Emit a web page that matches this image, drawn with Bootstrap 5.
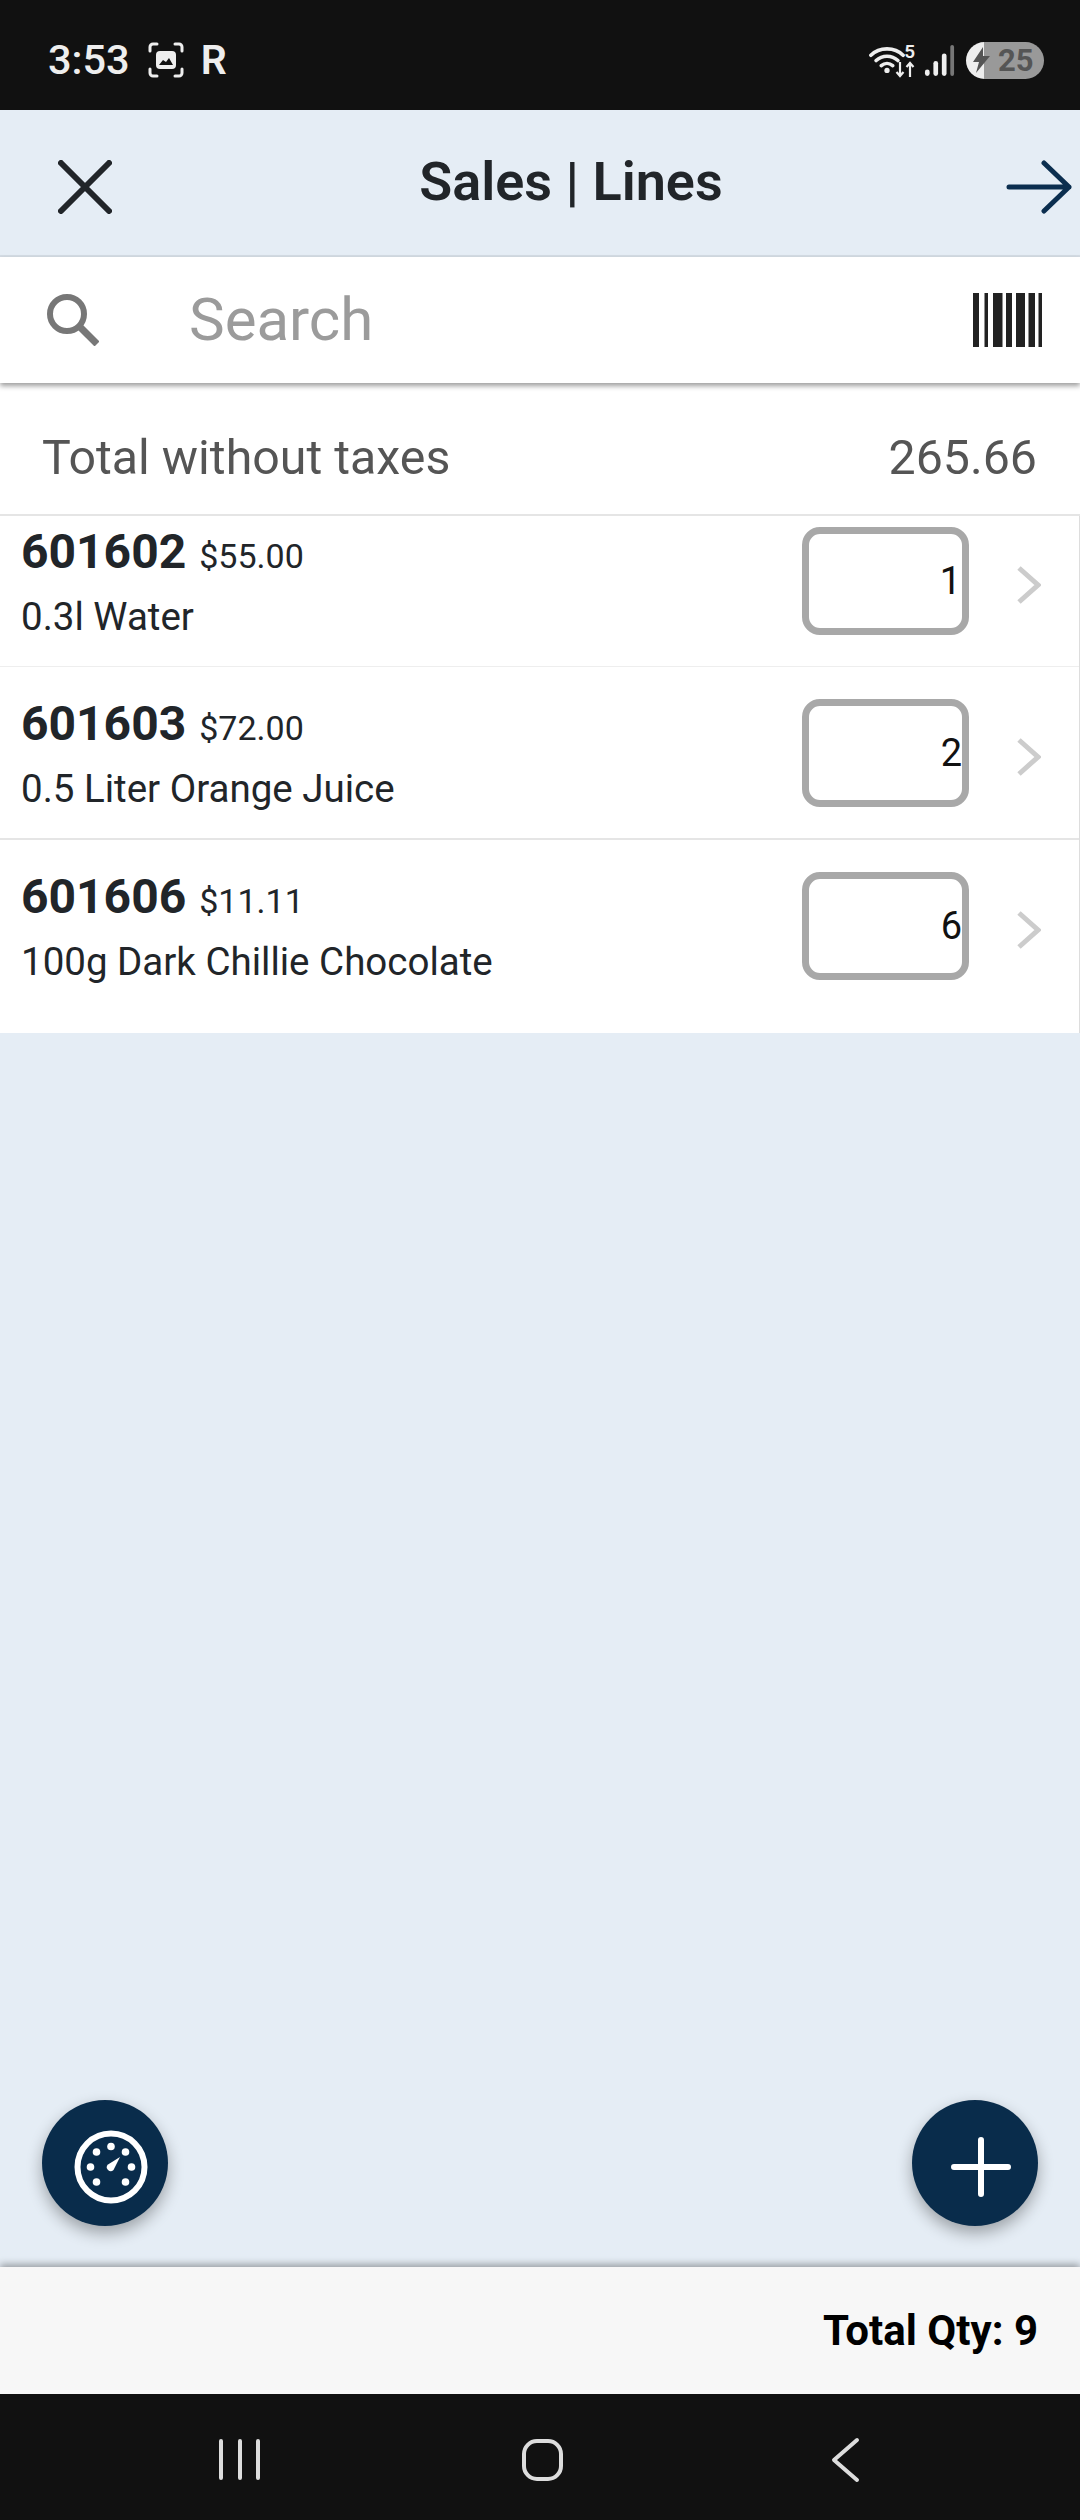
<!DOCTYPE html>
<html lang="en">
  <head>
    <meta charset="UTF-8" />
    <meta name="viewport" content="width=device-width, initial-scale=1.0" />
    <title>Sales | Lines</title>
    <link
      rel="stylesheet"
      href="https://cdn.jsdelivr.net/npm/bootstrap@5.3.0/dist/css/bootstrap.min.css"
    />
    <style>
      body {
        font-family: Roboto, "Liberation Sans", sans-serif;
        background: #e5edf5;
        color: #212529;
      }

      .phone {
        width: 1080px;
        height: 2520px;
      }

      .status-bar {
        height: 110px;
        background: #111;
        color: #eee;
        padding: 10px 36px 0 48px;
      }

      .clock {
        font-size: 41.500px;
        font-weight: 500;
        line-height: 1;
      }

      .shot-icon {
        margin-left: 18px;
      }

      .carrier {
        font-size: 41px;
        font-weight: 600;
        line-height: 1;
        margin-left: 17px;
      }

      .wifi-five {
        font-size: 19px;
        font-weight: 600;
        line-height: 1;
      }

      .wifi-arrows {
        margin-left: -10px;
      }

      .signal-icon {
        margin-left: 9px;
      }

      .battery {
        width: 78px;
        height: 37px;
        margin-left: 11px;
        border-radius: 19px;
        background: linear-gradient(90deg, #eee 18px, #999 18px);
        color: #555;
        font-size: 31px;
        font-weight: 700;
        line-height: 1;
        padding-left: 7px;
      }

      .app-bar {
        height: 147px;
        background: #e5edf5;
        border-bottom: 2px solid #d5dde5;
        padding: 8px 8px 0 58px;
      }

      .app-title {
        font-size: 54px;
        font-weight: 600;
        line-height: 1;
        padding-left: 24px;
        margin-top: -10px;
      }

      .search-bar {
        height: 126px;
        background: #fff;
        padding: 0 38px 0 47px;
        box-shadow: 0 3px 5px rgba(0, 0, 0, 0.38);
        position: relative;
        z-index: 2;
      }

      .search-text {
        color: #9b9b9b;
        font-size: 60px;
        line-height: 1;
        margin-left: 90px;
      }

      .total-row {
        height: 133px;
        background: #fff;
        border-bottom: 2px solid #e5e5e5;
        color: #555;
        font-size: 48.300px;
        line-height: 1;
        padding: 20px 43px 0 42px;
      }

      .line-list {
        background: #fff;
        border-right: 1px solid #ddd;
      }

      .line-row {
        padding: 32px 38px 31px 21px;
        border-bottom: 1px solid #eee;
      }

      .line-row:first-child {
        padding-top: 11px;
      }

      .line-row:nth-child(2) {
        border-bottom: 2px solid #e5e5e5;
      }

      .line-row:last-child {
        padding-bottom: 53px;
        border-bottom: 0;
      }

      .line-code {
        height: 56px;
        margin-top: -3px;
        font-size: 48px;
        font-weight: 700;
        line-height: 56px;
      }

      .line-price {
        font-size: 34px;
        margin-left: 13px;
      }

      .line-name {
        font-size: 38.500px;
        line-height: 44px;
        margin-top: 15px;
      }

      .qty-text-col {
        height: 108px;
      }

      .qty-box {
        width: 167px;
        height: 108px;
        border: 7px solid #a8a8a8;
        border-radius: 18px;
        color: #111;
        font-size: 38px;
        line-height: 1;
        padding-right: 1px;
      }

      .qty-wide {
        padding-right: 0;
      }

      .line-chevron {
        margin-left: 48px;
        margin-top: 8px;
      }

      .fab {
        width: 126px;
        height: 126px;
        padding: 0;
        background: #092c4b;
        border: 0;
        box-shadow: 0 7px 16px rgba(0, 0, 0, 0.32);
        position: absolute;
        bottom: 41px;
      }

      .fab-left {
        left: 42px;
        padding: 8px 0 0 11px;
      }

      .fab-right {
        right: 42px;
        padding: 8px 0 0 12px;
      }

      .fab:hover {
        background: #092c4b;
      }

      .qty-footer {
        height: 127px;
        background: #f7f7f7;
        color: #000;
        font-size: 42px;
        font-weight: 700;
        line-height: 1;
        padding-right: 42px;
        box-shadow: 0 -3px 7px rgba(0, 0, 0, 0.32);
        position: relative;
        z-index: 2;
      }

      .nav-bar {
        height: 126px;
        background: #111;
      }
    </style>
  </head>

  <body>
    <div class="phone d-flex flex-column">
      <!-- status bar -->
      <div class="status-bar d-flex align-items-center justify-content-between">
        <div class="d-flex align-items-center">
          <span class="clock">3:53</span>
          <svg class="shot-icon" width="36" height="36" viewBox="0 0 36 36" fill="none" stroke="#eee" stroke-width="3" stroke-linecap="round">
            <path d="M2 9V5a3 3 0 0 1 3-3h4M27 2h4a3 3 0 0 1 3 3v4M34 27v4a3 3 0 0 1-3 3h-4M9 34H5a3 3 0 0 1-3-3v-4" />
            <rect x="8" y="9" width="20" height="18" rx="4" fill="#eee" stroke="none" />
            <path d="M11 23l4-5 3 2 3-4 4 7z" fill="#111" stroke="none" />
          </svg>
          <span class="carrier">R</span>
        </div>
        <div class="d-flex align-items-center">
          <svg width="36" height="30" viewBox="0 0 38 30" fill="none" stroke="#eee" stroke-width="3.800" stroke-linecap="round">
            <path d="M2 10C11 1 27 1 36 10M7.500 15.500C14 9.500 24 9.500 30.500 15.500M13 21c3.500-3 8.500-3 12 0" />
            <circle cx="19" cy="26" r="2.800" fill="#eee" stroke="none" />
          </svg>
          <div class="wifi-arrows d-flex flex-column align-items-end">
            <span class="wifi-five">5</span>
            <svg width="20" height="17" viewBox="0 0 20 17" fill="none" stroke="#eee" stroke-width="2.200">
              <path d="M5 1v14M1.500 11L5 15l3.500-4M15 16V2M11.500 6L15 2l3.500 4" />
            </svg>
          </div>
          <svg class="signal-icon" width="31" height="34" viewBox="0 0 33 34">
            <rect x="1" y="27" width="5" height="7" rx="2.500" fill="#eee" />
            <rect x="10" y="18" width="5" height="16" rx="2.500" fill="#eee" />
            <rect x="19" y="10" width="5" height="24" rx="2.500" fill="#eee" />
            <rect x="28" y="1" width="4" height="33" rx="2" fill="#777" />
          </svg>
          <div class="battery d-flex align-items-center">
            <svg width="17" height="26" viewBox="0 0 17 26">
              <path d="M10 0L0 15h6L3 26l14-17H10z" fill="#555" />
            </svg>
            <span class="ms-2">25</span>
          </div>
        </div>
      </div>

      <!-- app bar -->
      <div class="app-bar d-flex align-items-center">
        <svg width="54" height="54" viewBox="0 0 54 54" fill="none" stroke="#212529" stroke-width="6" stroke-linecap="round">
          <path d="M3 3l48 48M51 3L3 51" />
        </svg>
        <div class="app-title flex-grow-1 text-center">Sales | Lines</div>
        <svg width="66" height="54" viewBox="0 0 66 54" fill="none" stroke="#0b2e4f" stroke-width="5" stroke-linecap="round" stroke-linejoin="round">
          <path d="M3 27h60M38 3l25 24-25 24" />
        </svg>
      </div>

      <!-- search -->
      <div class="search-bar d-flex align-items-center">
        <svg width="52" height="52" viewBox="0 0 52 52" fill="none" stroke="#777" stroke-width="6">
          <circle cx="20" cy="20" r="17" />
          <path d="M32 32l18 18" stroke-width="7" />
        </svg>
        <span class="search-text flex-grow-1">Search</span>
        <svg width="69" height="54" viewBox="0 0 69 54" fill="#222">
          <rect x="0" width="6" height="54" />
          <rect x="11.500" width="3.500" height="54" />
          <rect x="20" width="9.500" height="54" />
          <rect x="33" width="6" height="54" />
          <rect x="43" width="9" height="54" />
          <rect x="55.500" width="6.500" height="54" />
          <rect x="65.500" width="3.500" height="54" />
        </svg>
      </div>

      <!-- total -->
      <div class="total-row d-flex align-items-center justify-content-between">
        <span>Total without taxes</span>
        <span>265.66</span>
      </div>

      <!-- lines -->
      <div class="flex-grow-1 position-relative">
        <div class="line-list">
          <div class="line-row d-flex align-items-start">
            <div class="qty-text-col flex-grow-1">
              <div class="line-code">601602<span class="line-price fw-normal">$55.00</span></div>
              <div class="line-name">0.3l Water</div>
            </div>
            <div class="qty-box d-flex align-items-center justify-content-end">1</div>
            <svg class="line-chevron align-self-center" width="24" height="38" viewBox="0 0 24 38" fill="none" stroke="#ccc" stroke-width="5">
              <path d="M2 2l19 17L2 36" />
            </svg>
          </div>
          <div class="line-row d-flex align-items-start">
            <div class="qty-text-col flex-grow-1">
              <div class="line-code">601603<span class="line-price fw-normal">$72.00</span></div>
              <div class="line-name">0.5 Liter Orange Juice</div>
            </div>
            <div class="qty-box qty-wide d-flex align-items-center justify-content-end">2</div>
            <svg class="line-chevron align-self-center" width="24" height="38" viewBox="0 0 24 38" fill="none" stroke="#ccc" stroke-width="5">
              <path d="M2 2l19 17L2 36" />
            </svg>
          </div>
          <div class="line-row d-flex align-items-start">
            <div class="qty-text-col flex-grow-1">
              <div class="line-code">601606<span class="line-price fw-normal">$11.11</span></div>
              <div class="line-name">100g Dark Chillie Chocolate</div>
            </div>
            <div class="qty-box qty-wide d-flex align-items-center justify-content-end">6</div>
            <svg class="line-chevron align-self-center" width="24" height="38" viewBox="0 0 24 38" fill="none" stroke="#ccc" stroke-width="5">
              <path d="M2 2l19 17L2 36" />
            </svg>
          </div>
        </div>

        <button type="button" class="btn fab fab-left rounded-circle d-flex align-items-center justify-content-center">
          <svg width="74" height="74" viewBox="-37 -37 74 74" fill="#fff">
            <circle r="33.500" fill="none" stroke="#fff" stroke-width="6" />
            <circle cx="-20.500" r="3.800" />
            <circle cx="-14.500" cy="-15" r="3.800" />
            <circle cy="-20.500" r="3.800" />
            <circle cx="14.500" cy="-15" r="3.800" />
            <circle cx="20.500" r="3.800" />
            <circle cx="14.500" cy="15" r="3.800" />
            <circle cx="-14.500" cy="15" r="3.800" />
            <path d="M-3 -2.500L9 -10L2.500 3A3.800 3.800 0 0 1-3-2.500z" />
          </svg>
        </button>
        <button type="button" class="btn fab fab-right rounded-circle d-flex align-items-center justify-content-center">
          <svg width="60" height="60" viewBox="0 0 60 60" fill="none" stroke="#fff" stroke-width="6" stroke-linecap="round">
            <path d="M30 3v54M3 30h54" />
          </svg>
        </button>
      </div>

      <!-- footer -->
      <div class="qty-footer d-flex align-items-center justify-content-end">Total Qty: 9</div>

      <!-- android nav -->
      <div class="nav-bar d-flex align-items-center justify-content-center">
        <svg width="1080" height="126" viewBox="0 0 1080 126" fill="none" stroke="#ddd" stroke-width="4" stroke-linecap="round" stroke-linejoin="round">
          <path d="M221 47v37M240 47v37M258 47v37" />
          <rect x="524" y="47" width="37" height="38" rx="13" />
          <path d="M857 46L834 66l23 20" />
        </svg>
      </div>
    </div>

    <script src="https://cdn.jsdelivr.net/npm/bootstrap@5.3.0/dist/js/bootstrap.bundle.min.js"></script>
  </body>
</html>
